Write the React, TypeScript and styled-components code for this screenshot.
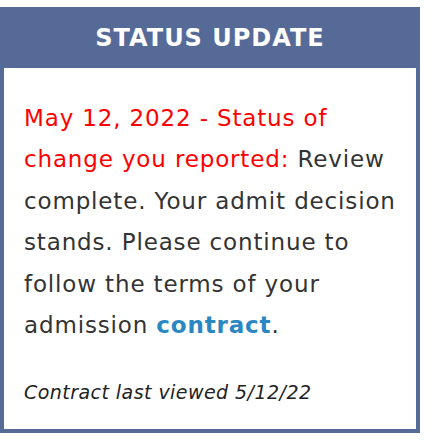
import * as React from "react";
import styled, { createGlobalStyle } from "styled-components";

const GlobalStyles = createGlobalStyle`
  html, body {
    margin: 0;
    padding: 0;
    background: #ffffff;
    font-family: "DejaVu Sans", Verdana, sans-serif;
  }
`;

const Page = styled.div`
  padding: 7px 13px 0 0;
`;

const Card = styled.section`
  width: 420px;
  box-sizing: border-box;
  border: 4px solid #566a98;
  border-top: none;
  background: #ffffff;
`;

const Header = styled.h2`
  margin: 0 -4px;
  height: 61px;
  background: #566a98;
  color: #ffffff;
  font-size: 24px;
  font-weight: 700;
  display: flex;
  align-items: center;
  justify-content: center;
  letter-spacing: 1px;
`;

const Body = styled.div`
  padding: 30px 12px 26px 20px;
`;

const Message = styled.p`
  margin: 0;
  font-size: 23px;
  line-height: 41.4px;
  letter-spacing: 0.85px;
  color: #333333;
`;

const Alert = styled.span`
  color: #ff0000;
`;

const Link = styled.a`
  color: #2a87c2;
  font-weight: 700;
  text-decoration: none;
`;

const Footnote = styled.p`
  margin: 35px 0 0 0;
  font-size: 19px;
  font-style: italic;
  letter-spacing: 0.45px;
  color: #222222;
`;

export default function App() {
  return (
    <>
      <GlobalStyles />
      <Page>
        <Card>
          <Header>STATUS UPDATE</Header>
          <Body>
            <Message>
              <Alert>May 12, 2022 - Status of change you reported:</Alert>{" "}
              Review complete. Your admit decision stands. Please continue to
              follow the terms of your admission <Link href="#">contract</Link>.
            </Message>
            <Footnote>Contract last viewed 5/12/22</Footnote>
          </Body>
        </Card>
      </Page>
    </>
  );
}
